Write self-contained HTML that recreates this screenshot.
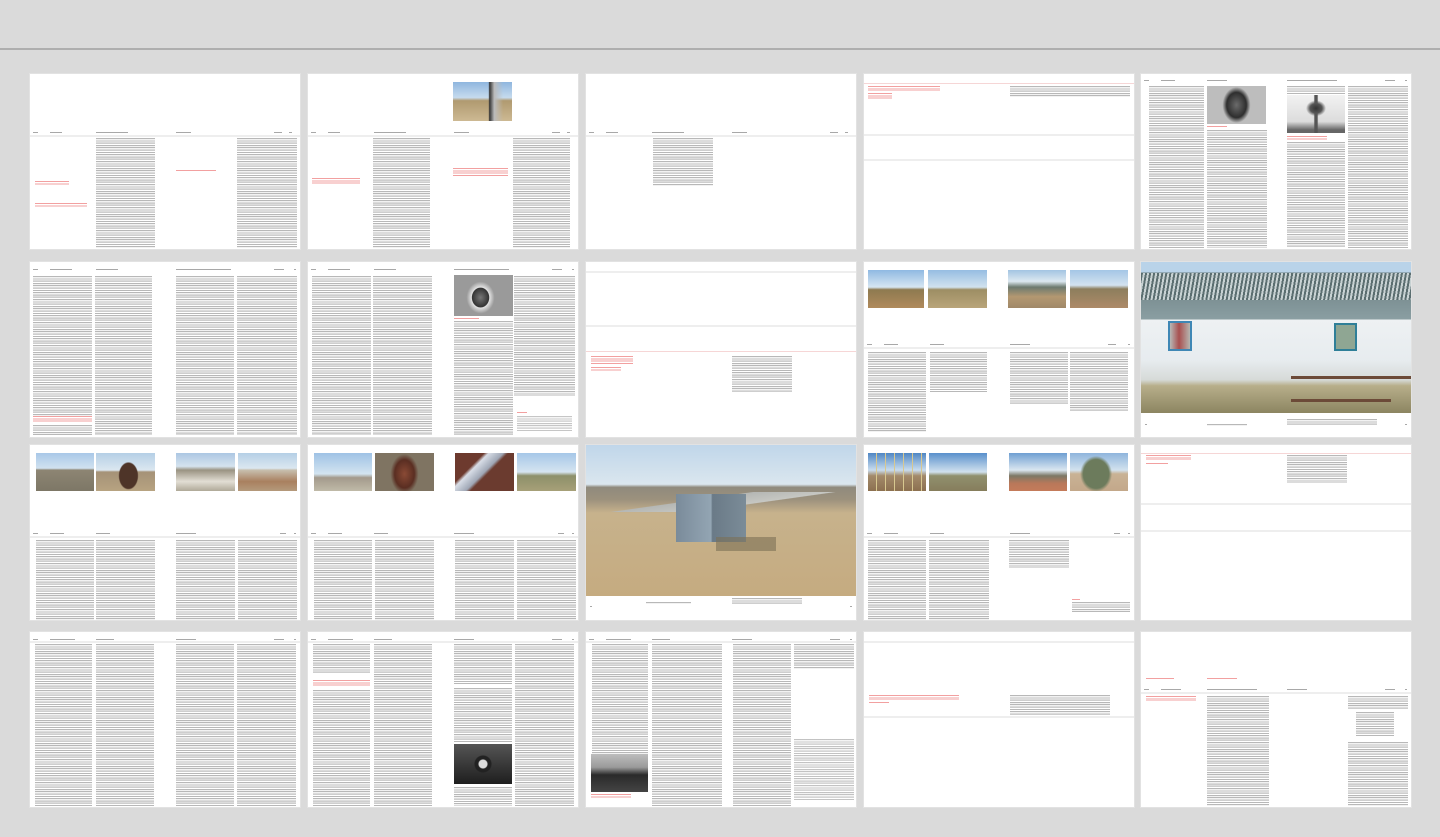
<!DOCTYPE html>
<html><head><meta charset="utf-8"><style>
*{margin:0;padding:0;box-sizing:border-box}
body{width:1440px;height:837px;background:#dadada;position:relative;overflow:hidden;font-family:"Liberation Sans","Noto Sans CJK SC",sans-serif}
.top{position:absolute;left:0;top:48px;width:1440px;height:2px;background:#aeaeae}
.s{position:absolute;width:270px;height:175px;background:#fff;box-shadow:0 0 0 1px #e2e2e2}
.s div{position:absolute}
.t{background:repeating-linear-gradient(#b8b8b8 0 1px,#e4e4e4 1px 1.4px,transparent 1.4px 2.3px)}
.r{background:repeating-linear-gradient(#f2a0a0 0 1px,transparent 1px 2.3px)}
.sep{left:0;width:270px;height:2px;background:#eeeeee}
.sepr{left:0;width:270px;height:1px;background:#f6d6d6}
.hd{height:1px;background:#a8a8a8}
</style></head><body>
<div class="top"></div>

<!-- ROW 1 -->
<div class="s" style="left:30px;top:74px">
<div class="hd" style="left:3px;top:58px;width:5px"></div><div class="hd" style="left:20px;top:58px;width:12px"></div><div class="hd" style="left:66px;top:58px;width:32px"></div><div class="hd" style="left:146px;top:58px;width:15px"></div><div class="hd" style="left:244px;top:58px;width:8px"></div><div class="hd" style="left:259px;top:58px;width:3px"></div>
<div class="sep" style="top:61px"></div>
<div class="t" style="left:66px;top:64px;width:59px;height:110px"></div>
<div class="r" style="left:5px;top:107px;width:34px;height:4px"></div>
<div class="r" style="left:5px;top:129px;width:52px;height:4px"></div>
<div class="r" style="left:146px;top:96px;width:40px;height:2px"></div>
<div class="t" style="left:207px;top:64px;width:60px;height:110px"></div>
</div>

<div class="s" style="left:308px;top:74px">
<div style="left:145px;top:8px;width:59px;height:39px;background:linear-gradient(90deg,transparent 60%,#333 62%,#bbb 70%,transparent 85%),linear-gradient(#8fb6de,#c6dbee 40%,#b09a70 48%,#cdb993 100%)"></div>
<div class="hd" style="left:3px;top:58px;width:5px"></div><div class="hd" style="left:20px;top:58px;width:12px"></div><div class="hd" style="left:66px;top:58px;width:32px"></div><div class="hd" style="left:146px;top:58px;width:15px"></div><div class="hd" style="left:244px;top:58px;width:8px"></div><div class="hd" style="left:259px;top:58px;width:3px"></div>
<div class="sep" style="top:61px"></div>
<div class="r" style="left:4px;top:104px;width:48px;height:6px"></div>
<div class="t" style="left:65px;top:64px;width:57px;height:110px"></div>
<div class="r" style="left:145px;top:94px;width:55px;height:9px"></div>
<div class="t" style="left:205px;top:64px;width:57px;height:110px"></div>
</div>

<div class="s" style="left:586px;top:74px">
<div class="hd" style="left:3px;top:58px;width:5px"></div><div class="hd" style="left:20px;top:58px;width:12px"></div><div class="hd" style="left:66px;top:58px;width:32px"></div><div class="hd" style="left:146px;top:58px;width:15px"></div><div class="hd" style="left:244px;top:58px;width:8px"></div><div class="hd" style="left:259px;top:58px;width:3px"></div>
<div class="sep" style="top:61px"></div>
<div class="t" style="left:67px;top:64px;width:60px;height:48px"></div>
</div>

<div class="s" style="left:864px;top:74px">
<div class="sepr" style="top:9px"></div>
<div class="r" style="left:4px;top:12px;width:72px;height:5px"></div>
<div class="r" style="left:4px;top:19px;width:24px;height:7px"></div>
<div class="t" style="left:146px;top:12px;width:120px;height:11px"></div>
<div class="sep" style="top:60px"></div>
<div class="sep" style="top:85px"></div>
</div>

<div class="s" style="left:1141px;top:74px">
<div class="hd" style="left:3px;top:6px;width:5px"></div><div class="hd" style="left:20px;top:6px;width:14px"></div><div class="hd" style="left:66px;top:6px;width:20px"></div><div class="hd" style="left:146px;top:6px;width:50px"></div><div class="hd" style="left:244px;top:6px;width:10px"></div><div class="hd" style="left:264px;top:6px;width:2px"></div>
<div class="t" style="left:8px;top:12px;width:55px;height:162px"></div>
<div style="left:66px;top:12px;width:59px;height:38px;background:radial-gradient(ellipse 14px 18px at 50% 50%,#6b6b6b,#2e2e2e 70%,#bdbdbd 100%)"></div>
<div class="r" style="left:66px;top:52px;width:20px;height:1px"></div>
<div class="t" style="left:66px;top:56px;width:60px;height:118px"></div>
<div class="t" style="left:146px;top:12px;width:58px;height:8px"></div>
<div style="left:146px;top:21px;width:58px;height:38px;background:radial-gradient(ellipse 10px 8px at 50% 35%,#333,#555 60%,transparent 100%),linear-gradient(90deg,transparent 46%,#555 48%,#555 52%,transparent 54%),linear-gradient(#f2f2f2,#dcdcdc 70%,#666 92%)"></div>
<div class="r" style="left:146px;top:62px;width:40px;height:4px"></div>
<div class="t" style="left:146px;top:68px;width:58px;height:106px"></div>
<div class="t" style="left:207px;top:12px;width:60px;height:162px"></div>
</div>

<!-- ROW 2 -->
<div class="s" style="left:30px;top:262px">
<div class="hd" style="left:3px;top:7px;width:5px"></div><div class="hd" style="left:20px;top:7px;width:22px"></div><div class="hd" style="left:66px;top:7px;width:22px"></div><div class="hd" style="left:146px;top:7px;width:55px"></div><div class="hd" style="left:244px;top:7px;width:10px"></div><div class="hd" style="left:264px;top:7px;width:2px"></div>
<div class="t" style="left:3px;top:14px;width:59px;height:140px"></div>
<div class="r" style="left:3px;top:154px;width:59px;height:7px"></div>
<div class="t" style="left:3px;top:163px;width:59px;height:10px"></div>
<div class="t" style="left:65px;top:14px;width:57px;height:159px"></div>
<div class="t" style="left:146px;top:14px;width:58px;height:159px"></div>
<div class="t" style="left:207px;top:14px;width:60px;height:159px"></div>
</div>

<div class="s" style="left:308px;top:262px">
<div class="hd" style="left:3px;top:7px;width:5px"></div><div class="hd" style="left:20px;top:7px;width:22px"></div><div class="hd" style="left:66px;top:7px;width:22px"></div><div class="hd" style="left:146px;top:7px;width:55px"></div><div class="hd" style="left:244px;top:7px;width:10px"></div><div class="hd" style="left:264px;top:7px;width:2px"></div>
<div class="t" style="left:4px;top:14px;width:59px;height:159px"></div>
<div class="t" style="left:65px;top:14px;width:59px;height:159px"></div>
<div style="left:146px;top:13px;width:59px;height:41px;background:radial-gradient(ellipse 14px 16px at 45% 55%,#777,#333 60%,#e3e3e3 64%,#9a9a9a 100%)"></div>
<div class="r" style="left:146px;top:56px;width:25px;height:1px"></div>
<div class="t" style="left:146px;top:59px;width:59px;height:114px"></div>
<div class="t" style="left:206px;top:14px;width:61px;height:120px"></div>
<div class="r" style="left:209px;top:150px;width:10px;height:2px"></div>
<div class="t" style="left:209px;top:154px;width:55px;height:16px;opacity:.8"></div>
</div>

<div class="s" style="left:586px;top:262px">
<div class="sep" style="top:9px"></div>
<div class="sep" style="top:63px"></div>
<div class="sepr" style="top:89px"></div>
<div class="r" style="left:5px;top:94px;width:42px;height:8px"></div>
<div class="r" style="left:5px;top:105px;width:30px;height:4px"></div>
<div class="t" style="left:146px;top:94px;width:60px;height:36px"></div>
</div>

<div class="s" style="left:864px;top:262px">
<div style="left:4px;top:8px;width:56px;height:38px;background:linear-gradient(#8fb9e2,#d6e6f2 45%,#8e7a50 52%,#b08a5c 100%)"></div>
<div style="left:64px;top:8px;width:59px;height:38px;background:linear-gradient(#96bde2,#d1e2ee 45%,#9d8e64 52%,#b9a57a 100%)"></div>
<div style="left:144px;top:8px;width:58px;height:38px;background:linear-gradient(#a2c4e2,#dce8f0 30%,#6d7a6f 45%,#b39871 70%,#a08868 100%)"></div>
<div style="left:206px;top:8px;width:58px;height:38px;background:linear-gradient(#a4c6e6,#d3e2ef 40%,#8d7e5d 50%,#ad8a68 100%)"></div>
<div class="hd" style="left:3px;top:82px;width:5px"></div><div class="hd" style="left:20px;top:82px;width:14px"></div><div class="hd" style="left:66px;top:82px;width:14px"></div><div class="hd" style="left:146px;top:82px;width:20px"></div><div class="hd" style="left:244px;top:82px;width:8px"></div><div class="hd" style="left:264px;top:82px;width:2px"></div>
<div class="sep" style="top:85px"></div>
<div class="t" style="left:4px;top:90px;width:58px;height:80px"></div>
<div class="t" style="left:66px;top:90px;width:57px;height:40px"></div>
<div class="t" style="left:146px;top:90px;width:58px;height:52px"></div>
<div class="t" style="left:206px;top:90px;width:58px;height:60px"></div>
</div>

<div class="s" style="left:1141px;top:262px">
<div style="left:0;top:0;width:270px;height:151px;background:
linear-gradient(#b9d3e9 0,#b9d3e9 7%,transparent 7%),
linear-gradient(transparent 7%,#6c7f82 7%,#8a9ea2 38%,transparent 38%),
linear-gradient(transparent 38%,#eef1f3 38%,#e7ecef 65%,#d6dad8 78%,#b7ae8a 82%,#8c8561 100%)"></div>
<div style="left:0;top:11px;width:270px;height:27px;background:repeating-linear-gradient(100deg,#5b6e70 0 2px,#c8d2d3 2px 4px)"></div>
<div style="left:27px;top:59px;width:24px;height:30px;border:2px solid #3f87b5;background:linear-gradient(90deg,#b7b8b6,#a85050 45%,#b6b6b0)"></div>
<div style="left:193px;top:61px;width:23px;height:28px;border:2px solid #2f7f98;background:#8fa693"></div>
<div style="left:150px;top:114px;width:120px;height:3px;background:#6c4a38"></div>
<div style="left:150px;top:137px;width:100px;height:3px;background:#6c4a38"></div>
<div class="hd" style="left:4px;top:162px;width:2px"></div>
<div class="t" style="left:66px;top:162px;width:40px;height:2px"></div>
<div class="t" style="left:146px;top:157px;width:90px;height:7px"></div>
<div class="hd" style="left:264px;top:162px;width:2px"></div>
</div>

<!-- ROW 3 -->
<div class="s" style="left:30px;top:445px">
<div style="left:6px;top:8px;width:58px;height:38px;background:linear-gradient(#a9c8e8,#d0e1ef 40%,#8d8573 45%,#7d7766 100%)"></div>
<div style="left:66px;top:8px;width:59px;height:38px;background:radial-gradient(ellipse 10px 14px at 55% 60%,#4e3428 90%,transparent 100%),linear-gradient(#b5cfe6,#dbe7f0 45%,#a59277 50%,#b7a381 100%)"></div>
<div style="left:146px;top:8px;width:59px;height:38px;background:linear-gradient(#acc7e3,#d5e3ee 35%,#9a9382 45%,#e2ded4 75%,#b0a998 100%)"></div>
<div style="left:208px;top:8px;width:59px;height:38px;background:linear-gradient(#b5cfe6,#dbe7f0 40%,#c7bfae 45%,#a9805f 75%,#b49a7c 100%)"></div>
<div class="hd" style="left:3px;top:88px;width:5px"></div><div class="hd" style="left:20px;top:88px;width:14px"></div><div class="hd" style="left:66px;top:88px;width:14px"></div><div class="hd" style="left:146px;top:88px;width:20px"></div><div class="hd" style="left:250px;top:88px;width:6px"></div><div class="hd" style="left:264px;top:88px;width:2px"></div>
<div class="sep" style="top:91px"></div>
<div class="t" style="left:6px;top:95px;width:58px;height:80px"></div>
<div class="t" style="left:66px;top:95px;width:59px;height:80px"></div>
<div class="t" style="left:146px;top:95px;width:59px;height:80px"></div>
<div class="t" style="left:208px;top:95px;width:59px;height:80px"></div>
</div>

<div class="s" style="left:308px;top:445px">
<div style="left:6px;top:8px;width:58px;height:38px;background:linear-gradient(#9fc2e5,#d3e4f0 55%,#a39a8c 65%,#c0baa8 100%)"></div>
<div style="left:67px;top:8px;width:59px;height:38px;background:radial-gradient(ellipse 14px 20px at 50% 55%,#8a4a35,#5a2e22 70%,#7f7462 100%)"></div>
<div style="left:147px;top:8px;width:59px;height:38px;background:linear-gradient(135deg,#6d3a2e 30%,#d8dde6 35%,#9fa7b5 50%,#6b3b2f 55%)"></div>
<div style="left:209px;top:8px;width:59px;height:38px;background:linear-gradient(#a6c7e8,#d5e4f0 50%,#8d906a 60%,#a7a078 100%)"></div>
<div class="hd" style="left:3px;top:88px;width:5px"></div><div class="hd" style="left:20px;top:88px;width:14px"></div><div class="hd" style="left:66px;top:88px;width:14px"></div><div class="hd" style="left:146px;top:88px;width:20px"></div><div class="hd" style="left:250px;top:88px;width:6px"></div><div class="hd" style="left:264px;top:88px;width:2px"></div>
<div class="sep" style="top:91px"></div>
<div class="t" style="left:6px;top:95px;width:58px;height:80px"></div>
<div class="t" style="left:67px;top:95px;width:59px;height:80px"></div>
<div class="t" style="left:147px;top:95px;width:59px;height:80px"></div>
<div class="t" style="left:209px;top:95px;width:59px;height:80px"></div>
</div>

<div class="s" style="left:586px;top:445px">
<div style="left:0;top:0;width:270px;height:151px;background:linear-gradient(#c0d6ea 0,#dae6ee 26%,#8f8a7d 28%,#9c917d 36%,#c7b28c 45%,#c5ab80 100%)"></div>
<div style="left:0;top:47px;width:270px;height:20px;background:linear-gradient(172deg,transparent 40%,#b5b7b4 41%,#c6c7c2 60%,transparent 61%)"></div>
<div style="left:90px;top:49px;width:70px;height:48px;background:linear-gradient(90deg,#7a8b9a 0,#93a5b3 50%,#6a7a87 52%,#7b8c98 100%)"></div>
<div style="left:130px;top:92px;width:60px;height:14px;background:#7c6f55;opacity:.6"></div>
<div class="hd" style="left:4px;top:161px;width:2px"></div>
<div class="t" style="left:60px;top:157px;width:45px;height:2px"></div>
<div class="t" style="left:146px;top:153px;width:70px;height:7px"></div>
<div class="hd" style="left:264px;top:161px;width:2px"></div>
</div>

<div class="s" style="left:864px;top:445px">
<div style="left:4px;top:8px;width:58px;height:38px;background:repeating-linear-gradient(90deg,transparent 0 8px,#d8c890 8px 9px),linear-gradient(#4f86c4,#c9dcee 45%,#a38a6a 60%,#8c7050 100%)"></div>
<div style="left:65px;top:8px;width:58px;height:38px;background:linear-gradient(#5990cc,#d1e1ee 50%,#90906e 60%,#867d5c 100%)"></div>
<div style="left:145px;top:8px;width:58px;height:38px;background:linear-gradient(#6f9fd2,#dae6f0 45%,#7d7866 60%,#b9785a 80%,#c47b5a 100%)"></div>
<div style="left:206px;top:8px;width:58px;height:38px;background:radial-gradient(ellipse 16px 18px at 45% 55%,#6c7b5c 80%,transparent 100%),linear-gradient(#8fb5dc,#d2e2ee 45%,#c9b295 55%,#c3a88a 100%)"></div>
<div class="hd" style="left:3px;top:88px;width:5px"></div><div class="hd" style="left:20px;top:88px;width:14px"></div><div class="hd" style="left:66px;top:88px;width:14px"></div><div class="hd" style="left:146px;top:88px;width:20px"></div><div class="hd" style="left:250px;top:88px;width:6px"></div><div class="hd" style="left:264px;top:88px;width:2px"></div>
<div class="sep" style="top:91px"></div>
<div class="t" style="left:4px;top:95px;width:58px;height:80px"></div>
<div class="t" style="left:65px;top:95px;width:60px;height:80px"></div>
<div class="t" style="left:145px;top:95px;width:60px;height:28px"></div>
<div class="r" style="left:208px;top:154px;width:8px;height:2px"></div>
<div class="t" style="left:208px;top:157px;width:58px;height:10px"></div>
</div>

<div class="s" style="left:1141px;top:445px">
<div class="sepr" style="top:8px"></div>
<div class="r" style="left:5px;top:10px;width:45px;height:5px"></div>
<div class="r" style="left:5px;top:18px;width:22px;height:2px"></div>
<div class="t" style="left:146px;top:10px;width:60px;height:28px"></div>
<div class="sep" style="top:58px"></div>
<div class="sep" style="top:85px"></div>
</div>

<!-- ROW 4 -->
<div class="s" style="left:30px;top:632px">
<div class="hd" style="left:3px;top:7px;width:5px"></div><div class="hd" style="left:20px;top:7px;width:25px"></div><div class="hd" style="left:66px;top:7px;width:18px"></div><div class="hd" style="left:146px;top:7px;width:20px"></div><div class="hd" style="left:244px;top:7px;width:10px"></div><div class="hd" style="left:264px;top:7px;width:2px"></div>
<div class="sep" style="top:9px"></div>
<div class="t" style="left:5px;top:12px;width:57px;height:162px"></div>
<div class="t" style="left:66px;top:12px;width:58px;height:162px"></div>
<div class="t" style="left:146px;top:12px;width:58px;height:162px"></div>
<div class="t" style="left:207px;top:12px;width:59px;height:162px"></div>
</div>

<div class="s" style="left:308px;top:632px">
<div class="hd" style="left:3px;top:7px;width:5px"></div><div class="hd" style="left:20px;top:7px;width:25px"></div><div class="hd" style="left:66px;top:7px;width:18px"></div><div class="hd" style="left:146px;top:7px;width:20px"></div><div class="hd" style="left:244px;top:7px;width:10px"></div><div class="hd" style="left:264px;top:7px;width:2px"></div>
<div class="sep" style="top:9px"></div>
<div class="t" style="left:5px;top:12px;width:57px;height:30px"></div>
<div class="r" style="left:5px;top:48px;width:57px;height:7px"></div>
<div class="t" style="left:5px;top:58px;width:57px;height:116px"></div>
<div class="t" style="left:66px;top:12px;width:58px;height:162px"></div>
<div class="t" style="left:146px;top:12px;width:58px;height:40px"></div>
<div style="left:146px;top:112px;width:58px;height:40px;background:radial-gradient(circle at 50% 50%,#ddd 0 4px,#222 5px 8px,transparent 9px),linear-gradient(#555,#1e1e1e)"></div>
<div class="t" style="left:146px;top:56px;width:58px;height:54px"></div>
<div class="t" style="left:146px;top:155px;width:58px;height:19px"></div>
<div class="t" style="left:207px;top:12px;width:59px;height:162px"></div>
</div>

<div class="s" style="left:586px;top:632px">
<div class="hd" style="left:3px;top:7px;width:5px"></div><div class="hd" style="left:20px;top:7px;width:25px"></div><div class="hd" style="left:66px;top:7px;width:18px"></div><div class="hd" style="left:146px;top:7px;width:20px"></div><div class="hd" style="left:244px;top:7px;width:10px"></div><div class="hd" style="left:264px;top:7px;width:2px"></div>
<div class="sep" style="top:9px"></div>
<div class="t" style="left:6px;top:12px;width:56px;height:110px"></div>
<div style="left:5px;top:122px;width:57px;height:38px;background:linear-gradient(#bdbdbd,#9a9a9a 35%,#2a2a2a 55%,#444 100%)"></div>
<div class="r" style="left:5px;top:162px;width:40px;height:4px"></div>
<div class="t" style="left:66px;top:12px;width:70px;height:162px"></div>
<div class="t" style="left:147px;top:12px;width:58px;height:162px"></div>
<div class="t" style="left:208px;top:12px;width:60px;height:25px"></div>
<div class="t" style="left:208px;top:107px;width:60px;height:62px;opacity:.85"></div>
</div>

<div class="s" style="left:864px;top:632px">
<div class="sep" style="top:9px"></div>
<div class="r" style="left:5px;top:63px;width:90px;height:5px"></div>
<div class="r" style="left:5px;top:70px;width:20px;height:2px"></div>
<div class="t" style="left:146px;top:63px;width:100px;height:20px"></div>
<div class="sep" style="top:84px"></div>
</div>

<div class="s" style="left:1141px;top:632px">
<div class="r" style="left:5px;top:46px;width:28px;height:2px"></div>
<div class="r" style="left:66px;top:46px;width:30px;height:2px"></div>
<div class="hd" style="left:3px;top:57px;width:5px"></div><div class="hd" style="left:20px;top:57px;width:20px"></div><div class="hd" style="left:66px;top:57px;width:50px"></div><div class="hd" style="left:146px;top:57px;width:20px"></div><div class="hd" style="left:244px;top:57px;width:10px"></div><div class="hd" style="left:264px;top:57px;width:2px"></div>
<div class="sep" style="top:60px"></div>
<div class="r" style="left:5px;top:64px;width:50px;height:5px"></div>
<div class="t" style="left:66px;top:64px;width:62px;height:110px"></div>
<div class="t" style="left:207px;top:64px;width:60px;height:13px"></div>
<div class="t" style="left:215px;top:80px;width:38px;height:24px"></div>
<div class="t" style="left:207px;top:110px;width:60px;height:64px"></div>
</div>

</body></html>
